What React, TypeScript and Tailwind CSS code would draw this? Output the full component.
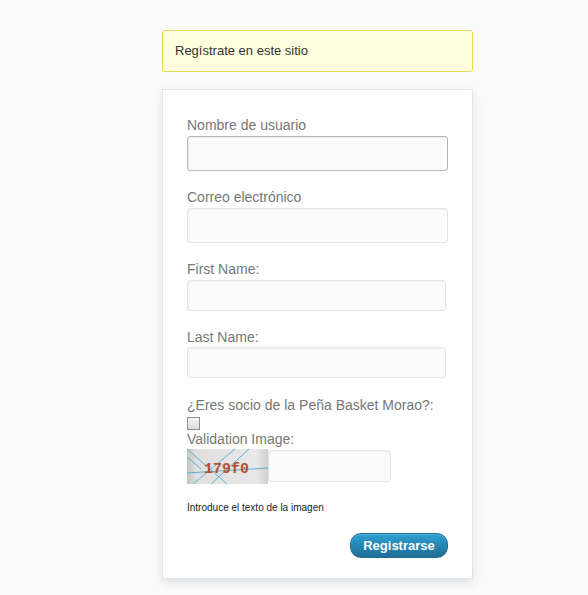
import React from 'react'

const labelCls = 'block text-[14px] leading-[17px] text-[#777]'
const inputCls =
    'block rounded-[3px] border bg-[#fbfbfb] shadow-[inset_1px_1px_2px_rgba(200,200,200,0.2)] outline-none'

function Captcha() {
    return (
        <svg width="81" height="35" viewBox="0 0 81 35" className="block shrink-0">
            <defs>
                <linearGradient id="cg" x1="0" y1="0" x2="1" y2="0">
                    <stop offset="0" stopColor="#c4c4c4" />
                    <stop offset="0.12" stopColor="#e0e0e0" />
                    <stop offset="0.85" stopColor="#e8e8e8" />
                    <stop offset="1" stopColor="#d0d0d0" />
                </linearGradient>
            </defs>
            <rect width="81" height="35" fill="url(#cg)" />
            <g stroke="#3aa6cf" strokeWidth="0.8" fill="none">
                <line x1="0" y1="0" x2="40" y2="35" />
                <line x1="6" y1="35" x2="48" y2="0" />
                <line x1="24" y1="35" x2="62" y2="0" />
                <line x1="0" y1="24" x2="81" y2="19" />
                <line x1="0" y1="8" x2="14" y2="20" />
            </g>
            <text
                x="17"
                y="24"
                fontFamily="'Liberation Mono', monospace"
                fontSize="15"
                fontWeight="bold"
                fill="#b3502f"
            >
                179f0
            </text>
        </svg>
    )
}

export default function App() {
    return (
        <div className="min-h-[595px] bg-[#fbfbfb] pt-[30px] font-['Liberation_Sans',Arial,sans-serif]">
            <div className="ml-[162px] w-[311px]">
                <div className="h-[42px] rounded-[3px] border border-[#e6db55] bg-[#ffffe0] pl-[12px] flex items-center text-[13px] text-[#333]">
                    Regístrate en este sitio
                </div>

                <form className="mt-[17px] border border-[#e5e5e5] bg-white pt-[27px] pb-[20px] pl-[24px] pr-[24px] shadow-[0_4px_10px_-1px_rgba(200,208,214,0.7)]">
                    <label className={labelCls}>Nombre de usuario</label>
                    <input className={`${inputCls} mt-[2px] h-[35px] w-[261px] border-[#b4b4b4]`} />

                    <label className={`${labelCls} mt-[18px]`}>Correo electrónico</label>
                    <input className={`${inputCls} mt-[2px] h-[35px] w-[261px] border-[#e5e5e5]`} />

                    <label className={`${labelCls} mt-[18px]`}>First Name:</label>
                    <input className={`${inputCls} mt-[2px] h-[31px] w-[259px] border-[#e5e5e5]`} />

                    <label className={`${labelCls} mt-[18px]`}>Last Name:</label>
                    <input className={`${inputCls} mt-[1px] h-[31px] w-[259px] border-[#e5e5e5]`} />

                    <label className={`${labelCls} mt-[19px]`}>¿Eres socio de la Peña Basket Morao?:</label>
                    <input
                        type="checkbox"
                        className="mt-[3px] block h-[13px] w-[13px] appearance-none border border-[#8e8e8e] bg-gradient-to-b from-[#f4f4f4] to-[#dcdcdc]"
                    />

                    <label className={`${labelCls} mt-[1px]`}>Validation Image:</label>
                    <div className="mt-[1px] flex items-start">
                        <Captcha />
                        <input className={`${inputCls} mt-[1px] h-[32px] w-[123px] border-[#e5e5e5]`} />
                    </div>

                    <p className="mt-[18px] text-[10px] leading-[12px] text-[#222]">Introduce el texto de la imagen</p>

                    <div className="mt-[19px] flex justify-end">
                        <button
                            type="button"
                            className="h-[25px] w-[98px] rounded-[11px] border border-[#1f6a8d] bg-gradient-to-b from-[#2e9fd2] to-[#1e6f95] text-[13px] font-bold text-white shadow-[inset_0_1px_0_rgba(120,200,230,0.5)]"
                        >
                            Registrarse
                        </button>
                    </div>
                </form>
            </div>
        </div>
    )
}
